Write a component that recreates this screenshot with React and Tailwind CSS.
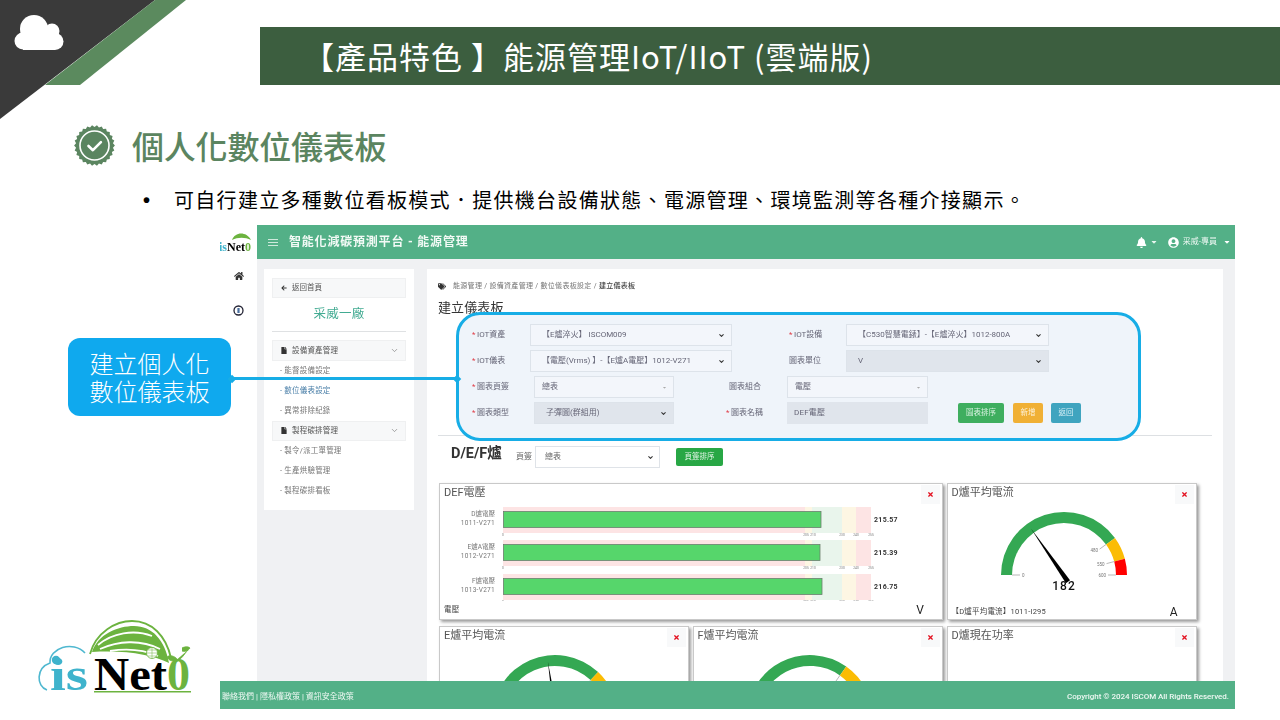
import React from 'react';
import { FaHome, FaBell, FaUserCircle, FaTags, FaFile, FaArrowLeft, FaTimes, FaCaretDown } from 'react-icons/fa';
import { ChevronDown } from 'lucide-react';

const pt = (cx, cy, r, frac) => {
  const a = Math.PI * (1 - frac);
  return [cx + r * Math.cos(a), cy - r * Math.sin(a)];
};
const band = (cx, cy, R, r, f0, f1) => {
  const [a, b] = pt(cx, cy, R, f0);
  const [c, d] = pt(cx, cy, R, f1);
  const [e, f] = pt(cx, cy, r, f1);
  const [g, h] = pt(cx, cy, r, f0);
  return `M${a} ${b}A${R} ${R} 0 0 1 ${c} ${d}L${e} ${f}A${r} ${r} 0 0 0 ${g} ${h}Z`;
};

function Gauge({ cx, f1 = 0.8, f2 = 0.9167, value, labels = [], num }) {
  const cy = 72;
  let needle = null;
  if (value != null) {
    const [tx, ty] = pt(cx, cy, 57, value);
    const [nx, ny] = [cx + 2 - (tx - cx) * 0.06, cy + 4 - (ty - cy) * 0.06];
    const dx = (ty - ny) / 57 * 2.2;
    const dy = -(tx - nx) / 57 * 2.2;
    needle = <path d={`M${tx} ${ty}L${nx + dx} ${ny + dy}L${nx - dx} ${ny - dy}Z`} fill="#000" />;
  }
  return (
    <svg width="248" height="100" className="block overflow-visible">
      <path d={band(cx, cy, 63, 52, 0, f1)} fill="#34a853" />
      <path d={band(cx, cy, 63, 52, f1, f2)} fill="#fbbc04" />
      <path d={band(cx, cy, 63, 52, f2, 1)} fill="#ff0000" />
      {labels.map(([f, t]) => {
        const [a, b] = pt(cx, cy, 52, f);
        const [c, d] = pt(cx, cy, 44, f);
        const [e, g] = pt(cx, cy, 42, f);
        return (
          <g key={f}>
            <line x1={a} y1={b} x2={c} y2={d} stroke="#999" strokeWidth="0.7" />
            {t && <text x={e} y={g + 1.5} fontSize="4.5" fill="#777" textAnchor={f < 0.5 ? 'start' : 'end'}>{t}</text>}
          </g>
        );
      })}
      {needle}
      {num && (
        <text x={cx} y={87} fontSize="12" fontWeight="500" fill="#111" textAnchor="middle" letterSpacing="1">{num}</text>
      )}
    </svg>
  );
}

function Bullet() {
  const rows = [
    ['D爐電壓', '1011-V271', 821, '215.57'],
    ['E爐A電壓', '1012-V271', 820, '215.39'],
    ['F爐電壓', '1013-V271', 822, '216.75'],
  ];
  const X = (v) => v - 440;
  const ys = [4, 37, 71];
  return (
    <svg width="502" height="100" className="block">
      {rows.map((r, i) => {
        const y = ys[i];
        return (
          <g key={r[1]}>
            <rect x={X(503)} y={y} width={302} height="26" fill="#fde4e4" />
            <rect x={X(805)} y={y} width={7} height="26" fill="#fdf6e3" />
            <rect x={X(812)} y={y} width={30} height="26" fill="#e9f5ec" />
            <rect x={X(842)} y={y} width={14} height="26" fill="#fdf6e3" />
            <rect x={X(856)} y={y} width={15} height="26" fill="#fde4e4" />
            <rect x={X(503.5)} y={y + 4.5} width={r[2] - 503.5} height="16" fill="#56d66b" stroke="#6b7f6f" strokeWidth="0.8" />
            <text x={55} y={y + 9} fontSize="6.5" fill="#777" textAnchor="end">{r[0]}</text>
            <text x={55} y={y + 18} fontSize="6.5" fill="#777" textAnchor="end" letterSpacing="0.3">{r[1]}</text>
            <text x={X(874)} y={y + 14.5} fontSize="7" fontWeight="700" fill="#333" letterSpacing="0.3">{r[3]}</text>
            {[['0', 503], ['205', 806], ['210', 813], ['230', 842], ['240', 856], ['255', 871]].map(([t, x]) => (
              <text key={t} x={X(x)} y={y + 28.5} fontSize="3.2" fill="#777" textAnchor="middle">{t}</text>
            ))}
          </g>
        );
      })}
    </svg>
  );
}

function Card({ title, children, footL, footR, className = '' }) {
  return (
    <div className={`h-[137px] bg-white border border-[#c9c9c9] shadow-[2px_2px_3px_rgba(0,0,0,0.4)] flex flex-col ${className}`}>
      <div className="h-[19px] flex justify-between pl-[4px] pr-[2px] pt-[1px]">
        <span className="text-[11px] leading-[16px] text-[#555]">{title}</span>
        <span className="w-[19px] h-[19px] bg-[#f8f9fa] flex items-center justify-center">
          <FaTimes className="w-[7px] h-[7px] text-[#e3101f]" />
        </span>
      </div>
      {children}
      {(footL || footR) && (
        <div className="flex-1 flex items-center justify-between pl-[4px] pr-[18px]">
          <span className="text-[7.5px] text-[#444] tracking-[0.2px]">{footL}</span>
          <span className="text-[12px] text-[#222]">{footR}</span>
        </div>
      )}
    </div>
  );
}

function Sel({ w, text, grey, caret }) {
  return (
    <div className={`${w} h-[22px] flex items-center justify-between border border-[#dde3ea] pl-[7px] pr-[6px] text-[8px] text-[#667] ${grey ? 'bg-[#e0e5ec]' : 'bg-[#f3f6fb]'}`}>
      <span className="whitespace-pre">{text}</span>
      {caret ? <FaCaretDown className="w-[5px] h-[5px] text-[#aaa]" /> : <ChevronDown className="w-[7px] h-[7px] text-[#333]" strokeWidth={3.5} />}
    </div>
  );
}

function Label({ w, req, children }) {
  return (
    <span className={`${w} text-[8px] text-[#667] shrink-0 whitespace-nowrap`}>
      {req && <span className="text-[#e0404a] mr-[1.5px]">*</span>}{children}
    </span>
  );
}

function SideItem({ children, active }) {
  return <div className={`h-[20px] pl-[8px] flex items-center text-[7.5px] tracking-[0.2px] ${active ? 'text-[#4a7fa8]' : 'text-[#777]'}`}>- {children}</div>;
}

function SideGroup({ children }) {
  return (
    <div className="h-[20.5px] bg-[#f7f8f9] border border-[#eff0f1] flex items-center pl-[8px] pr-[6px] text-[7.5px] text-[#555] tracking-[0.2px]">
      <FaFile className="w-[6px] h-[7px] text-[#333] mr-[5px]" />
      <span className="flex-1">{children}</span>
      <ChevronDown className="w-[9px] h-[9px] text-[#888]" />
    </div>
  );
}

function Cloud() {
  return (
    <svg width="186" height="120" className="absolute left-0 top-0">
      <polygon points="0,0 155,0 0,119" fill="#3a3a3a" />
      <polygon points="155,0 186,0 80,85 45,85" fill="#5b8a5e" />
      <g fill="#fff">
        <circle cx="34" cy="29" r="14" />
        <circle cx="52" cy="31" r="7.5" />
        <circle cx="23" cy="41" r="8.5" />
        <circle cx="55" cy="41.5" r="8.5" />
        <rect x="23" y="33" width="32" height="17" />
      </g>
    </svg>
  );
}

function Badge() {
  const n = 26;
  const pts = [];
  for (let i = 0; i < n * 2; i++) {
    const a = (i / (n * 2)) * Math.PI * 2;
    const r = i % 2 ? 18.6 : 20.4;
    pts.push(`${20.5 + r * Math.cos(a)},${20.5 + r * Math.sin(a)}`);
  }
  return (
    <svg width="41" height="41" className="shrink-0">
      <polygon points={pts.join(' ')} fill="#5b8560" />
      <circle cx="20.5" cy="20.5" r="14.5" fill="none" stroke="#fff" strokeWidth="1.6" />
      <path d="M14.5 21l4.4 4.2 8-8" fill="none" stroke="#fff" strokeWidth="2.6" strokeLinecap="round" strokeLinejoin="round" />
    </svg>
  );
}

function BigLogo() {
  const serif = "'Liberation Serif', serif";
  return (
    <svg width="156" height="80" viewBox="0 0 156 80" className="absolute left-[38px] top-[618px]">
      <path d="M9 72C-2 68 -2 50 12 45C11 30 35 22 47 35" fill="none" stroke="#4fb8d0" strokeWidth="1.6" />
      <path d="M52 36C58 14 78 3 94 3C114 3 128 18 133 40" fill="none" stroke="#6cb33f" strokeWidth="1.8" />
      <path d="M54 34C60 16 80 8 96 8C114 8 127 22 131 45C114 37 90 32 54 34Z" fill="#6cb33f" />
      <path d="M60 27C74 15 96 11 114 18M62 31C80 23 102 21 122 31M72 33C90 30 104 31 120 38" fill="none" stroke="#fff" strokeWidth="1.8" />
      <circle cx="114" cy="35" r="5.5" fill="#fff" stroke="#6cb33f" strokeWidth="0.8" />
      <path d="M108.5 35h11M114 29.5v11M110 32h8M110 38h8" stroke="#6cb33f" strokeWidth="0.5" fill="none" />
      <path d="M136 44C144 42 146 36 150 32M144 30c4-2 7-1 8 0-2 3-5 4-8 3M140 42c-4-5-9-5-11-3 2 4 6 5 11 3z" fill="#6cb33f" stroke="#6cb33f" strokeWidth="0.8" />
      <circle cx="18" cy="42" r="4.2" fill="#3fb3cc" />
      <rect x="56" y="73" width="97" height="1.5" fill="#6cb33f" />
      <text x="12" y="72" fontFamily={serif} fontWeight="700" fontSize="46" fill="#3fb3cc" textLength="38" lengthAdjust="spacingAndGlyphs">is</text>
      <text x="56" y="72" fontFamily={serif} fontWeight="700" fontSize="46" fill="#000" textLength="73" lengthAdjust="spacingAndGlyphs">Net</text>
      <text x="129" y="72" fontFamily={serif} fontWeight="700" fontSize="46" fill="#6cb33f">0</text>
    </svg>
  );
}

export default function App() {
  return (
    <div lang="zh-TW" className="relative w-[1280px] h-[720px] bg-white overflow-hidden font-['Noto_Sans_CJK_TC',sans-serif]">
      <Cloud />
      <BigLogo />

      <div className="pt-[27px] pl-[260px]">
        <div className="h-[58px] bg-[#3c5e3f] pl-[43px] flex items-center text-white text-[31px] tracking-[1px] whitespace-nowrap">
          【產品特色 】能源管理IoT/IIoT (雲端版)
        </div>
      </div>

      <div className="mt-[40px] ml-[74px] h-[40px] flex items-center gap-[17px]">
        <Badge />
        <span className="text-[#5b8560] text-[32px] leading-none font-medium tracking-[-0.2px]">個人化數位儀表板</span>
      </div>

      <div className="mt-[23px] ml-[143px] h-[24px] flex items-center text-black text-[20px] tracking-[1.3px] whitespace-nowrap">
        <span className="w-[31px] font-bold font-['Liberation_Sans',sans-serif]">•</span>
        <span>可自行建立多種數位看板模式．提供機台設備狀態、電源管理、環境監測等各種介接顯示。</span>
      </div>

      <div className="relative mt-[13px] ml-[220px] w-[1015px] h-[484px] flex overflow-hidden blur-[0.35px] font-[Roboto,'Noto_Sans_CJK_TC',sans-serif]">
        <div className="w-[37px] shrink-0 bg-white flex flex-col items-center pt-[6px] overflow-hidden">
          <svg width="37" height="22" className="block">
            <path d="M12 9C15 1 26 0 31 9C25 6 18 6 12 9Z" fill="#6cb33f" />
            <text y="20" fontFamily="'Liberation Serif', serif" fontWeight="700" fontSize="12">
              <tspan x="-1" fill="#3fb3cc">is</tspan>
              <tspan fill="#000">Net</tspan>
              <tspan fill="#6cb33f">0</tspan>
            </text>
          </svg>
          <FaHome className="mt-[18px] w-[10px] h-[10px] text-[#333]" />
          <svg width="11" height="11" viewBox="0 0 11 11" className="mt-[24px]">
            <circle cx="5.5" cy="5.5" r="4.5" fill="#fff" stroke="#223" strokeWidth="1.3" />
            <rect x="4.4" y="3" width="2.2" height="5" fill="#4a6fa0" />
          </svg>
        </div>

        <div className="flex-1 flex flex-col min-w-0">
          <div className="h-[34px] shrink-0 bg-[#53b087] flex items-center pl-[11px] pr-[4px] text-white">
            <span className="flex flex-col gap-[2px] w-[10px] mr-[11px]">
              <span className="h-[1px] bg-[#cfe9dc]" />
              <span className="h-[1px] bg-[#cfe9dc]" />
              <span className="h-[1px] bg-[#cfe9dc]" />
            </span>
            <span className="text-[12px] font-bold tracking-[0.8px] text-[#f3faf6]">智能化減碳預測平台 - 能源管理</span>
            <span className="flex-1" />
            <FaBell className="w-[11px] h-[11px]" />
            <FaCaretDown className="w-[8px] h-[8px] ml-[3px] text-[#e8f5ee]" />
            <FaUserCircle className="w-[11px] h-[11px] ml-[10px]" />
            <span className="ml-[4px] text-[8px] text-[#eaf6f0]">采威-專員</span>
            <FaCaretDown className="w-[8px] h-[8px] ml-[6px]" />
          </div>

          <div className="flex-1 bg-[#f0f1f3] flex items-start pt-[10px] pl-[7px] gap-[13px] overflow-hidden">
            <div className="w-[150px] h-[241px] shrink-0 bg-white px-[8px] pt-[9px]">
              <div className="h-[20px] bg-[#f7f8f9] border border-[#eff0f1] flex items-center pl-[8px] text-[7.5px] text-[#555]">
                <FaArrowLeft className="w-[6px] h-[6px] mr-[5px] text-[#333]" />返回首頁
              </div>
              <div className="h-[33px] flex items-center justify-center text-[12.5px] tracking-[0.3px] text-[#42ab92]">采威一廠</div>
              <div className="h-px bg-[#dfe1e3] mb-[8px]" />
              <SideGroup>設備資產管理</SideGroup>
              <SideItem>能督設備設定</SideItem>
              <SideItem active>數位儀表設定</SideItem>
              <SideItem>異常排除紀錄</SideItem>
              <SideGroup>製程碳排管理</SideGroup>
              <SideItem>製令/派工單管理</SideItem>
              <SideItem>生產烘驗管理</SideItem>
              <SideItem>製程碳排看板</SideItem>
            </div>

            <div className="w-[796px] shrink-0 bg-white pl-[11px] pr-[11px] pt-[11px]">
              <div className="h-[12px] flex items-center text-[7px] text-[#777] tracking-[0.3px]">
                <FaTags className="w-[8px] h-[7px] text-[#333] mr-[7px]" />
                <span>能源管理 / 設備資產管理 / 數位儀表板設定 / </span>
                <span className="font-medium text-[#444]">&nbsp;建立儀表板</span>
              </div>
              <div className="mt-[7px] h-[18px] text-[13px] leading-[18px] tracking-[0.1px] text-[#333]">建立儀表板</div>

              <div className="relative z-10 -mt-[5px] ml-[18px] w-[685px] h-[129px] bg-[#eff4fa] border-[3px] border-[#17ade6] rounded-[24px] pl-[13px] pt-[9px] flex flex-col gap-[4px]">
                <div className="flex items-center">
                  <Label w="w-[58px]" req>IOT資產</Label>
                  <Sel w="w-[202px]" text="  【E爐淬火】 ISCOM009" />
                  <span className="w-[57px]" />
                  <Label w="w-[57px]" req>IOT設備</Label>
                  <Sel w="w-[203px]" text="  【C530智慧電錶】-【E爐淬火】1012-800A" />
                </div>
                <div className="flex items-center">
                  <Label w="w-[58px]" req>IOT儀表</Label>
                  <Sel w="w-[202px]" text="  【電壓(Vrms) 】-【E爐A電壓】1012-V271" />
                  <span className="w-[57px]" />
                  <Label w="w-[57px]">圖表單位</Label>
                  <Sel w="w-[203px]" grey text="  V" />
                </div>
                <div className="flex items-center">
                  <Label w="w-[62px]" req>圖表頁簽</Label>
                  <Sel w="w-[140px]" caret text="總表" />
                  <span className="w-[55px]" />
                  <Label w="w-[58px]">圖表組合</Label>
                  <Sel w="w-[141px]" caret text="電壓" />
                </div>
                <div className="flex items-center">
                  <Label w="w-[62px]" req>圖表類型</Label>
                  <Sel w="w-[140px]" grey text="  子彈圖(群組用)" />
                  <span className="w-[52px]" />
                  <Label w="w-[61px]" req>圖表名稱</Label>
                  <div className="w-[141px] h-[22px] bg-[#e0e5ec] pl-[7px] flex items-center text-[8px] text-[#667] tracking-[0.2px]">DEF電壓</div>
                  <div className="ml-[30px] w-[46px] h-[20px] rounded-[2px] bg-[#3fae5f] flex items-center justify-center text-[7.5px] text-[#d9f2e1]">圖表排序</div>
                  <div className="ml-[9px] w-[30px] h-[20px] rounded-[2px] bg-[#f0b035] flex items-center justify-center text-[7.5px] text-[#fdf1d8]">新增</div>
                  <div className="ml-[8px] w-[30px] h-[20px] rounded-[2px] bg-[#3fa4bf] flex items-center justify-center text-[7.5px] text-[#d9f0f6]">返回</div>
                </div>
              </div>

              <div className="h-px -mt-[6px] bg-[#dde0e3]" />

              <div className="mt-[10px] h-[22px] flex items-center pl-[13px]">
                <span className="w-[65px] text-[14.5px] font-bold text-[#333] leading-none -mt-[5px] whitespace-nowrap">D/E/F爐</span>
                <span className="w-[19px] text-[8px] text-[#666]">頁簽</span>
                <div className="w-[125px] h-[22px] border border-[#dfe3e8] flex items-center justify-between pl-[9px] pr-[5px] text-[8px] text-[#666]">
                  總表
                  <ChevronDown className="w-[7px] h-[7px] text-[#333]" strokeWidth={3.5} />
                </div>
                <div className="ml-[16px] w-[47px] h-[18px] rounded-[2px] bg-[#28a745] flex items-center justify-center text-[7.5px] text-[#dff3e4]">頁簽排序</div>
              </div>

              <div className="mt-[15px] ml-[1px] grid grid-cols-[250px_250.5px_250px] gap-x-[3.5px] gap-y-[6px]">
                <Card title="DEF電壓" footL="電壓" footR="V" className="col-span-2">
                  <Bullet />
                </Card>
                <Card title="D爐平均電流" footL="【D爐平均電流】1011-I295" footR="A">
                  <Gauge cx={116} value={0.303} num="182" labels={[[0, '0'], [0.8, '480'], [0.9167, '550'], [1, '600']]} />
                </Card>
                <Card title="E爐平均電流">
                  <Gauge cx={115} f1={0.74} f2={0.86} value={0.46} labels={[[0.74, '']]} />
                </Card>
                <Card title="F爐平均電流">
                  <Gauge cx={116} f1={0.695} f2={0.85} labels={[[0.695, '']]} />
                </Card>
                <Card title="D爐現在功率" />
              </div>
            </div>
          </div>
        </div>

        <div className="absolute left-0 right-0 bottom-0 h-[28px] z-20 bg-[#53b087] flex items-center justify-between pl-[2px] pr-[6px] pt-[4px] text-[8px] text-[#eef8f3]">
          <span>聯絡我們 | 隱私權政策 | 資訊安全政策</span>
          <span className="font-medium tracking-[-0.04px]">Copyright © 2024 ISCOM All Rights Reserved.</span>
        </div>
      </div>

      <div className="absolute left-[68px] top-[338px] w-[163px] h-[78px] rounded-[12px] bg-[#0fa9ee] flex flex-col items-center justify-center text-white text-[24px] font-light leading-[28px] z-30">
        <span>建立個人化</span>
        <span>數位儀表板</span>
      </div>
      <div className="absolute left-[231px] top-[377px] w-[226px] h-[3px] bg-[#17ade6] z-30" />
      <div className="absolute left-[228.5px] top-[375.5px] w-[6px] h-[6px] rotate-45 bg-[#17ade6] z-30" />
      <div className="absolute left-[454px] top-[375.5px] w-[6px] h-[6px] rotate-45 bg-[#17ade6] z-30" />
    </div>
  );
}
